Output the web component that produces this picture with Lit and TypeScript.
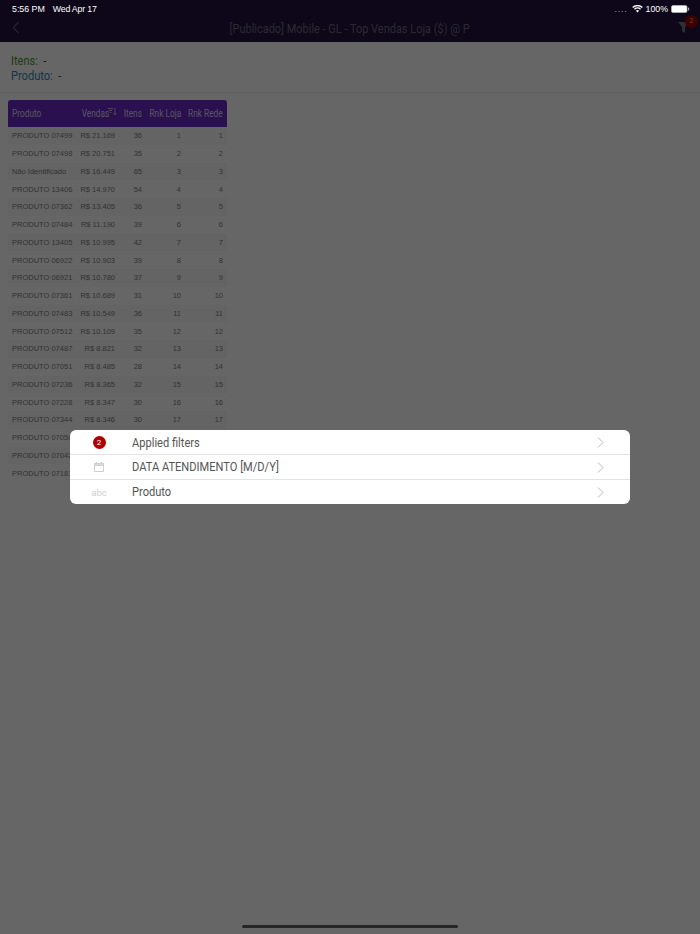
import { LitElement, html, css } from "lit";
import { customElement } from "lit/decorators.js";

const rows: [string, string, number, number, number][] = [
  ["PRODUTO 07499", "R$ 21.169", 36, 1, 1],
  ["PRODUTO 07498", "R$ 20.751", 35, 2, 2],
  ["Não Identificado", "R$ 16.449", 65, 3, 3],
  ["PRODUTO 13406", "R$ 14.970", 54, 4, 4],
  ["PRODUTO 07362", "R$ 13.405", 36, 5, 5],
  ["PRODUTO 07484", "R$ 11.190", 39, 6, 6],
  ["PRODUTO 13405", "R$ 10.995", 42, 7, 7],
  ["PRODUTO 06922", "R$ 10.903", 39, 8, 8],
  ["PRODUTO 06921", "R$ 10.780", 37, 9, 9],
  ["PRODUTO 07361", "R$ 10.689", 31, 10, 10],
  ["PRODUTO 07483", "R$ 10.549", 36, 11, 11],
  ["PRODUTO 07512", "R$ 10.109", 35, 12, 12],
  ["PRODUTO 07487", "R$ 8.821", 32, 13, 13],
  ["PRODUTO 07051", "R$ 8.485", 28, 14, 14],
  ["PRODUTO 07236", "R$ 8.365", 32, 15, 15],
  ["PRODUTO 07228", "R$ 8.347", 30, 16, 16],
  ["PRODUTO 07344", "R$ 8.346", 30, 17, 17],
];
const hiddenRows = ["PRODUTO 07056", "PRODUTO 07042", "PRODUTO 07181"];

@customElement("app-root")
export class AppRoot extends LitElement {
  static styles = css`
    :host {
      display: block;
      position: relative;
      width: 700px;
      height: 934px;
      overflow: hidden;
      background: #fff;
      font-family: "Roboto", "Liberation Sans", sans-serif;
    }
    .status {
      position: absolute;
      z-index: 3;
      top: 0;
      left: 0;
      right: 0;
      height: 17px;
      padding: 0 10px 0 12px;
      display: flex;
      align-items: center;
      justify-content: space-between;
      color: #fff;
      font: 8.8px "Liberation Sans", sans-serif;
    }
    .status .l { display: flex; gap: 8px; }
    .date { letter-spacing: -0.2px; }
    .status .r { display: flex; align-items: center; gap: 3px; }
    .dots { letter-spacing: 0.8px; color: #aaa; margin-right: 1px; }
    .nav {
      height: 41px;
      background: #21123f;
      border-bottom: 1px solid #1a1a1a;
      display: flex;
      align-items: flex-end;
      justify-content: center;
      position: relative;
    }
    .nav .title {
      font: 12.4px/24px "Roboto", sans-serif;
      color: #6e6a78;
      white-space: nowrap;
      transform: scaleX(0.885);
    }
    .back { position: absolute; left: 12px; top: 21px; }
    .filter { position: absolute; left: 678px; top: 20px; width: 11px; height: 14px; }
    .funnel { position: absolute; left: 0; top: 2px; }
    .filter .n {
      position: absolute; top: -5px; left: 7px;
      width: 13px; height: 13px; border-radius: 50%;
      background: #a00000; color: #bbb; font-size: 7px; line-height: 13px; text-align: center;
    }
    .summary {
      height: 51px;
      padding: 12px 0 0 11px;
      box-sizing: border-box;
      background: #fff;
      border-bottom: 1px solid #f2f2f2;
      font-size: 13px;
      line-height: 14.5px;
      color: #444;
    }
    .summary div { transform: scaleX(0.85); transform-origin: left center; }
    .green { color: #4f9a2c; }
    .blue { color: #2a86b0; }
    .wrap { padding: 7px 0 0 8px; }
    .table { width: 219px; font: 7.5px "Liberation Sans", sans-serif; color: #7e7e7e; }
    .head {
      height: 27px;
      background: #692ac4;
      border-radius: 3px 3px 0 0;
      color: #dcd3ec;
      font: 10px "Roboto", sans-serif;
    }
    .sq { display: inline-block; transform: scaleX(0.83); transform-origin: right center; white-space: nowrap; }
    .c0 .sq { transform-origin: left center; }
    .row { display: grid; grid-template-columns: 68px 39px 27px 39px 42px; padding-right: 4px; box-sizing: border-box; align-items: center; }
    .body .row { height: 17.76px; }
    .body .row:nth-child(odd) { background: #f9f9f9; }
    .c { text-align: right; white-space: nowrap; }
    .c0 { padding-left: 4px; text-align: left; white-space: nowrap; }
    .sort { position: relative; padding-right: 9px; }
    .sort svg { position: absolute; right: -2px; top: 0; }
    .overlay {
      position: absolute;
      z-index: 2;
      inset: 0;
      background: rgba(0, 0, 0, 0.6);
      display: flex;
      justify-content: center;
      padding-top: 430px;
      box-sizing: border-box;
    }
    .modal {
      width: 560px;
      height: 74px;
      background: #fff;
      border-radius: 6px;
      color: #555;
      font-size: 12.2px;
      display: flex;
      flex-direction: column;
    }
    .item {
      height: 25px;
      box-sizing: border-box;
      display: grid;
      grid-template-columns: 62px 1fr 33px;
      align-items: center;
      border-bottom: 1px solid #e3e3e3;
    }
    .item:first-child .label { padding-top: 1px; }
    .item:last-child { border-bottom: none; height: 24px; }
    .label { transform: scaleX(0.91); transform-origin: left center; }
    .ic { display: flex; justify-content: center; position: relative; left: -2px; color: #cfcfcf; font-size: 9.5px; }
    .badge {
      width: 13px; height: 13px; border-radius: 50%;
      background: #b00000; color: #fff; font-size: 8px; line-height: 13px; text-align: center;
    }
    .homebar {
      position: absolute;
      z-index: 3;
      left: 242px;
      bottom: 6px;
      width: 216px;
      height: 3px;
      border-radius: 2px;
      background: #262626;
    }
  `;

  render() {
    return html`
      <div class="status">
        <div class="l"><span>5:56 PM</span><span class="date">Wed Apr 17</span></div>
        <div class="r">
          <span class="dots">....</span>
          <svg width="11" height="8" viewBox="0 0 11 8"><path d="M5.5 7.6 3.9 5.8a2.3 2.3 0 0 1 3.2 0zM2.9 4.8 2 3.8a5 5 0 0 1 7 0l-.9 1a3.7 3.7 0 0 0-5.2 0zM1.2 3 .2 2a7.6 7.6 0 0 1 10.6 0l-1 1a6.2 6.2 0 0 0-8.6 0z" fill="#fff"/></svg>
          <span>100%</span>
          <svg width="19" height="8" viewBox="0 0 19 8"><rect x=".5" y=".5" width="15.5" height="7" rx="1.5" fill="#fff" stroke="#bbb" stroke-width=".7"/><rect x="17" y="2.6" width="1.2" height="2.8" rx=".5" fill="#aaa"/></svg>
        </div>
      </div>
      <div class="nav">
        <svg class="back" width="8" height="13" viewBox="0 0 8 13"><path d="M6.5 1 1.5 6.5 6.5 12" fill="none" stroke="#6e6a78" stroke-width="1.1"/></svg>
        <div class="title">[Publicado] Mobile - GL - Top Vendas Loja ($) @ P</div>
        <div class="filter">
          <svg class="funnel" width="11" height="11" viewBox="0 0 11 11"><path d="M0 0h11L7 5v6L4 9V5z" fill="#777"/></svg>
          <div class="n">2</div>
        </div>
      </div>
      <div class="summary">
        <div><span class="green">Itens:</span>&nbsp; -</div>
        <div><span class="blue">Produto:</span>&nbsp; -</div>
      </div>
      <div class="wrap">
        <div class="table">
          <div class="row head">
            <div class="c0"><span class="sq">Produto</span></div>
            <div class="c sort"><span class="sq">Vendas</span><svg width="9" height="7" viewBox="0 0 9 7"><path d="M0 .5h5M1 2.5h3M2 4.5h1.5M7 0v6.5M5.6 5 7 6.6 8.4 5" fill="none" stroke="#dcd3ec" stroke-width=".8"/></svg></div>
            <div class="c"><span class="sq">Itens</span></div>
            <div class="c"><span class="sq">Rnk Loja</span></div>
            <div class="c"><span class="sq">Rnk Rede</span></div>
          </div>
          <div class="body">
            ${rows.map(
              (r) => html`<div class="row">
                <div class="c0">${r[0]}</div>
                <div class="c">${r[1]}</div>
                <div class="c">${r[2]}</div>
                <div class="c">${r[3]}</div>
                <div class="c">${r[4]}</div>
              </div>`
            )}
            ${hiddenRows.map((n) => html`<div class="row"><div class="c0">${n}</div></div>`)}
          </div>
        </div>
      </div>
      <div class="overlay">
        <div class="modal">
          ${this.item(html`<div class="badge">2</div>`, "Applied filters")}
          ${this.item(
            html`<svg width="10" height="10" viewBox="0 0 10 10"><path d="M.5 1.5h9v8h-9z" fill="none" stroke="#cfcfcf"/><path d="M.5 1.5h9v2h-9z" fill="#dcdcdc" stroke="#cfcfcf"/><path d="M2.5 0v2M7.5 0v2" stroke="#cfcfcf"/></svg>`,
            "DATA ATENDIMENTO [M/D/Y]"
          )}
          ${this.item(html`<span>abc</span>`, "Produto")}
        </div>
      </div>
      <div class="homebar"></div>
    `;
  }

  item(icon: unknown, label: string) {
    return html`<div class="item">
      <div class="ic">${icon}</div>
      <div class="label">${label}</div>
      <svg width="7" height="11" viewBox="0 0 7 11"><path d="M1 .5 6 5.5 1 10.5" fill="none" stroke="#bbb"/></svg>
    </div>`;
  }
}
